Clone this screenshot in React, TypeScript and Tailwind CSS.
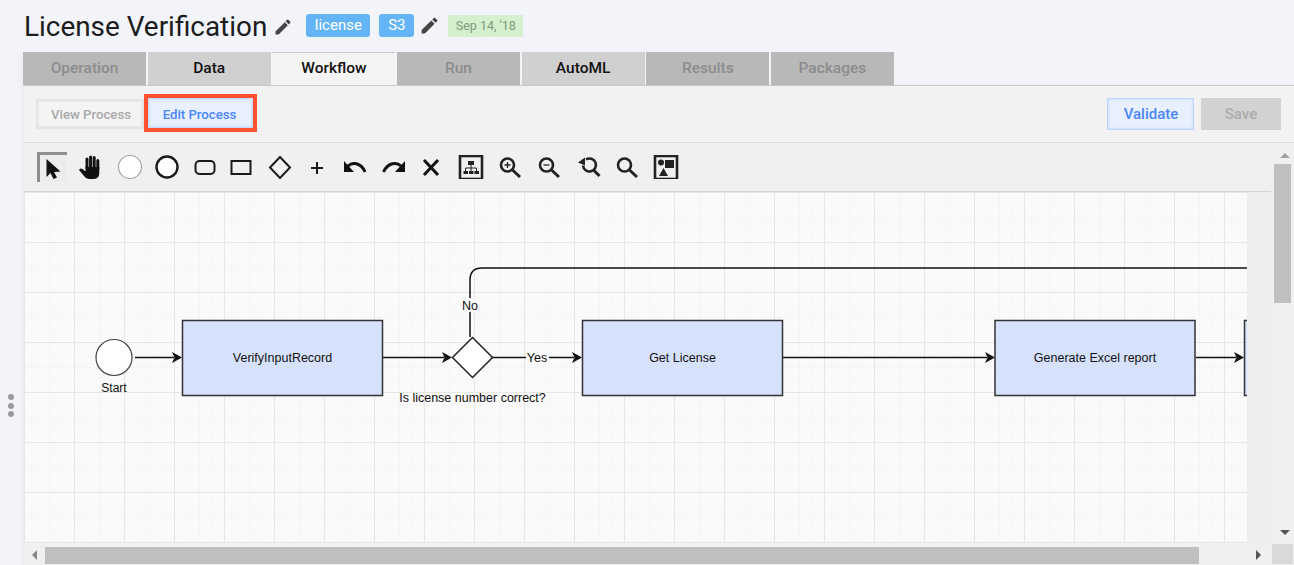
// App.tsx
import { MdEdit } from 'react-icons/md';

const tabs = [
    { label: 'Operation', state: 'off' },
    { label: 'Data', state: 'on' },
    { label: 'Workflow', state: 'active' },
    { label: 'Run', state: 'off' },
    { label: 'AutoML', state: 'on' },
    { label: 'Results', state: 'off' },
    { label: 'Packages', state: 'off' },
];

const tabClass: Record<string, string> = {
    off: 'bg-[#b8b8b8] text-[#8c8c8c]',
    on: 'bg-[#d0d0d0] text-[#111]',
    active: 'border-t border-[#c8c8c8] bg-[#f4f4f4] text-[#111]',
};

const ToolIcon = ({ children, w = 26 }: { children: React.ReactNode; w?: number }) => (
    <svg width={w} height="24" viewBox={`0 0 ${w} 24`} className="shrink-0">
        {children}
    </svg>
);

// toolbar icons, left to right, same order as the diagram editor
const Toolbar = () => (
    <div className="flex h-[49px] items-center border-b border-[#d4d4d4] bg-[#f0f0f2] pl-[13px]">
        <div className="flex h-[30px] w-[30px] items-center justify-center border-t-[3px] border-l-[3px] border-[#8f8f8f] bg-[#ececee]">
            <ToolIcon w={16}>
                <path d="M0.5 2 L0.5 20 L4.5 16 L7.5 22 L11 20.5 L8 15 L14.5 14.5 Z" fill="#111" />
            </ToolIcon>
        </div>
        <div className="ml-[8px] flex w-[30px] justify-center">
            <ToolIcon w={24}>
                <path d="M9 13 V4 M12.6 13 V2 M16.2 13 V2.5 M19.8 14 V5.5" stroke="#111" strokeWidth="3" strokeLinecap="round" />
                <path d="M7.5 12 H21.3 V18 Q21.3 24 15 24 H11 Q8 24 6 21 L1 15 Q2 12.5 4.5 14 L7.5 16.5 Z" fill="#111" />
            </ToolIcon>
        </div>
        <div className="ml-[12px]">
            <ToolIcon>
                <circle cx="13" cy="12" r="11.5" fill="#fff" stroke="#a8a8a8" strokeWidth="1.2" />
            </ToolIcon>
        </div>
        <div className="ml-[11px]">
            <ToolIcon>
                <circle cx="13" cy="12" r="10.5" fill="#fff" stroke="#1a1a1a" strokeWidth="2.4" />
            </ToolIcon>
        </div>
        <div className="ml-[12px]">
            <ToolIcon>
                <rect x="3.5" y="6" width="19" height="13" rx="4" fill="none" stroke="#1a1a1a" strokeWidth="2" />
            </ToolIcon>
        </div>
        <div className="ml-[10px]">
            <ToolIcon>
                <rect x="3.5" y="6" width="19" height="13" fill="none" stroke="#1a1a1a" strokeWidth="2" />
            </ToolIcon>
        </div>
        <div className="ml-[13px]">
            <ToolIcon>
                <path d="M13 2 L23 12.5 L13 23 L3 12.5 Z" fill="none" stroke="#1a1a1a" strokeWidth="2" />
            </ToolIcon>
        </div>
        <div className="ml-[11px]">
            <ToolIcon>
                <path d="M13 7 V19 M7 13 H19" stroke="#1a1a1a" strokeWidth="2" />
            </ToolIcon>
        </div>
        <div className="ml-[12px]">
            <ToolIcon>
                <path d="M2 6 L2 17 L12 17 Z" fill="#111" />
                <path d="M6 11 C10 7 19 7 23 17" fill="none" stroke="#111" strokeWidth="3" />
            </ToolIcon>
        </div>
        <div className="ml-[12px]">
            <ToolIcon>
                <path d="M25 6 L25 17 L15 17 Z" fill="#111" />
                <path d="M21 11 C17 7 8 7 3.5 17" fill="none" stroke="#111" strokeWidth="3" />
            </ToolIcon>
        </div>
        <div className="ml-[12px]">
            <ToolIcon>
                <path d="M6 5 L20 20 M20 5 L6 20" stroke="#111" strokeWidth="3" />
            </ToolIcon>
        </div>
        <div className="ml-[14px]">
            <ToolIcon>
                <rect x="2" y="1" width="22" height="23" fill="none" stroke="#222" strokeWidth="2.6" />
                <path d="M10 6 H16 V10 H10 Z M5.5 16 H10 V19 H5.5 Z M11 16 H15.5 V19 H11 Z M16.5 16 H21 V19 H16.5 Z" fill="#222" />
                <path d="M13 10 V16 M7.5 16 V13 H18.5 V16" fill="none" stroke="#222" />
            </ToolIcon>
        </div>
        <div className="ml-[14px]">
            <ToolIcon>
                <circle cx="9.5" cy="10" r="6.5" fill="none" stroke="#222" strokeWidth="2.6" />
                <path d="M14.5 15 L22 22" stroke="#222" strokeWidth="3" />
                <path d="M9.5 7 V13 M6.5 10 H12.5" stroke="#222" strokeWidth="1.3" />
            </ToolIcon>
        </div>
        <div className="ml-[13px]">
            <ToolIcon>
                <circle cx="9.5" cy="10" r="6.5" fill="none" stroke="#222" strokeWidth="2.6" />
                <path d="M14.5 15 L22 22" stroke="#222" strokeWidth="3" />
                <path d="M6.5 10 H12.5" stroke="#222" strokeWidth="1.3" />
            </ToolIcon>
        </div>
        <div className="ml-[13px]">
            <ToolIcon>
                <path d="M10 4.5 A6.5 6.5 0 1 1 7 10.5" fill="none" stroke="#222" strokeWidth="2.6" />
                <path d="M2 7.5 L9 2.5 L9 10.5 Z" fill="#222" />
                <path d="M17.5 15 L23.5 21" stroke="#222" strokeWidth="3" />
            </ToolIcon>
        </div>
        <div className="ml-[13px]">
            <ToolIcon>
                <circle cx="9.5" cy="10" r="6.5" fill="none" stroke="#222" strokeWidth="2.6" />
                <path d="M14.5 15 L22 22" stroke="#222" strokeWidth="3" />
            </ToolIcon>
        </div>
        <div className="ml-[12px]">
            <ToolIcon>
                <rect x="2" y="1" width="22" height="23" fill="none" stroke="#222" strokeWidth="2.6" />
                <circle cx="8" cy="7.5" r="3" fill="#222" />
                <rect x="12" y="5" width="9" height="8" fill="#222" />
                <path d="M6 21 L10.5 13 L15 21 Z" fill="#222" />
            </ToolIcon>
        </div>
    </div>
);

const Task = ({ x, label }: { x: number; label: string }) => (
    <g>
        <rect x={x} y="128.5" width="200" height="75" fill="#d6e2fd" stroke="#333" strokeWidth="1.5" />
        <text x={x + 100} y="170" textAnchor="middle">{label}</text>
    </g>
);

const Arrow = ({ x }: { x: number }) => <path d={`M${x} 165.5 l-10 -5.5 l2.5 5.5 l-2.5 5.5 Z`} fill="#111" />;

// coordinates inside the canvas, origin is the canvas top left (24,192)
const Diagram = () => (
    <svg width="1223" height="351" className="block font-['Liberation_Sans',sans-serif] text-[12.5px]" fill="#111">
        <path d="M111 165.5 H150 M359 165.5 H420 M468 165.5 H550 M759 165.5 H963 M1172 165.5 H1212 M446 145 V88 Q446 76 458 76 H1223" fill="none" stroke="#111" strokeWidth="1.5" />
        <Arrow x={158} />
        <Arrow x={428} />
        <Arrow x={558} />
        <Arrow x={971} />
        <Arrow x={1220} />
        <circle cx="90" cy="165.5" r="18" fill="#fff" stroke="#444" strokeWidth="1.2" />
        <text x="90" y="199.5" textAnchor="middle" className="text-[12px]">Start</text>
        <Task x={158.5} label="VerifyInputRecord" />
        <path d="M448.5 145.5 L468.5 165.5 L448.5 185.5 L428.5 165.5 Z" fill="#fff" stroke="#222" strokeWidth="1.5" />
        <rect x="437" y="106" width="18" height="14" fill="#fafafa" />
        <text x="446" y="117.5" textAnchor="middle">No</text>
        <rect x="502" y="158" width="23" height="15" fill="#fafafa" />
        <text x="513" y="170" textAnchor="middle">Yes</text>
        <text x="448.5" y="209.5" textAnchor="middle">Is license number correct?</text>
        <Task x={558.5} label="Get License" />
        <Task x={971} label="Generate Excel report" />
        <Task x={1220.5} label="" />
    </svg>
);

export default function App() {
    return (
        <div className="relative h-[565px] w-[1294px] overflow-hidden bg-[#f2f4f9] font-['Roboto',sans-serif]">
            <div className="flex h-[52px] items-center pb-[1px] pl-[24px]">
                <h1 className="mt-[2px] text-[27.9px] leading-none font-normal text-[#1c1c1c]">License Verification</h1>
                <MdEdit size={20} color="#444" className="ml-[6px] mt-[3px]" />
                <span className="ml-[13px] flex h-[23px] w-[64px] items-center justify-center rounded-[3px] bg-[#64b5f6] text-[15px] text-white">license</span>
                <span className="ml-[9px] flex h-[23px] w-[35px] items-center justify-center rounded-[3px] bg-[#64b5f6] text-[15px] text-white">S3</span>
                <MdEdit size={21} color="#444" className="ml-[5px]" />
                <span className="ml-[8px] mt-[1px] flex h-[22px] w-[75px] items-center justify-center bg-[#d5efcf] text-[12.5px] text-[#7c9a7c]">Sep 14, '18</span>
            </div>
            <div className="ml-[23px] flex h-[33px] w-[871px] gap-[1.5px] shadow-[-6px_0_6px_rgba(0,0,0,0.02)]">
                {tabs.map((t) => (
                    <div key={t.label} className={`flex flex-1 items-center justify-center text-[15.5px] font-medium ${tabClass[t.state]}`}>
                        {t.label}
                    </div>
                ))}
            </div>
            <div className="ml-[24px] border-t border-[#c8c8c8] bg-[#f2f2f2] shadow-[-2px_0_3px_rgba(0,0,0,0.05)]">
                <div className="flex h-[57px] items-center justify-between border-b border-[#dcdcdc] pr-[13px] pl-[12px]">
                    <div className="flex items-center">
                        <button className="h-[30px] w-[108px] border-2 border-[#e4e4e4] bg-[#f4f4f4] pt-[1px] pl-[2px] text-[13.2px] font-medium text-[#a9a9a9] shadow-[inset_0_0_2px_#d4d4d4]">View Process</button>
                        <div className="mb-[2px] border-4 border-[#ff5030]">
                            <button className="block h-[30px] w-[105px] border border-[#c8dafc] bg-[#e8f0fe] pt-[3px] pr-[2px] text-[13.2px] font-medium text-[#4a86f7] shadow-[inset_0_0_3px_#c0d4fb]">Edit Process</button>
                        </div>
                    </div>
                    <div className="flex items-center gap-[7px]">
                        <button className="h-[32px] w-[87px] border border-[#bcd3fb] bg-[#e8f0fe] pl-[1px] text-[15px] font-medium text-[#4a86f7] shadow-[inset_0_0_3px_#bcd3fb]">Validate</button>
                        <button className="h-[32px] w-[80px] bg-[#d2d2d2] text-[15px] font-medium text-[#acacac]">Save</button>
                    </div>
                </div>
                <div className="flex">
                    <div className="w-[1247px]">
                        <Toolbar />
                        <div className="flex h-[353px]">
                            <div className="h-[351px] w-[1223px] bg-[#fafafa] bg-[linear-gradient(#e6e6e6_1px,transparent_1px),linear-gradient(90deg,#e6e6e6_1px,transparent_1px),linear-gradient(#f5f5f5_1px,transparent_1px),linear-gradient(90deg,#f5f5f5_1px,transparent_1px)] bg-[size:50px_50px,50px_50px,12.5px_12.5px,12.5px_12.5px]">
                                <Diagram />
                            </div>
                            <div className="w-[24px] bg-[#ecedef]" />
                        </div>
                        <div className="flex h-[20px] items-center bg-[#f0f0f0]">
                            <div className="ml-[8px] h-0 w-0 border-y-[5px] border-r-[5px] border-y-transparent border-r-[#888]" />
                            <div className="ml-[8px] h-[17px] w-[1154px] bg-[#bfbfbf]" />
                            <div className="ml-[57px] h-0 w-0 border-y-[5px] border-l-[5px] border-y-transparent border-l-[#555]" />
                        </div>
                    </div>
                    <div className="flex w-[23px] flex-col bg-[#f0f0f0]">
                        <div className="ml-[9px] mt-[10px] h-0 w-0 border-x-[5px] border-b-[5px] border-x-transparent border-b-[#a0a0a0]" />
                        <div className="ml-[3px] mt-[6px] h-[139px] w-[17px] bg-[#bfbfbf]" />
                        <div className="ml-[9px] mt-[227px] h-0 w-0 border-x-[5px] border-t-[5px] border-x-transparent border-t-[#555]" />
                        <div className="ml-[1px] mt-[9px] h-[20px] w-[21px] bg-[#d9d9d9]" />
                    </div>
                </div>
            </div>
            {/* resize handle on the left edge */}
            <div className="absolute top-[394px] left-[8px] flex flex-col gap-[2.5px]">
                <span className="h-[6px] w-[6px] rounded-full bg-[#9a9a9a]" />
                <span className="h-[6px] w-[6px] rounded-full bg-[#9a9a9a]" />
                <span className="h-[6px] w-[6px] rounded-full bg-[#9a9a9a]" />
            </div>
        </div>
    );
}
